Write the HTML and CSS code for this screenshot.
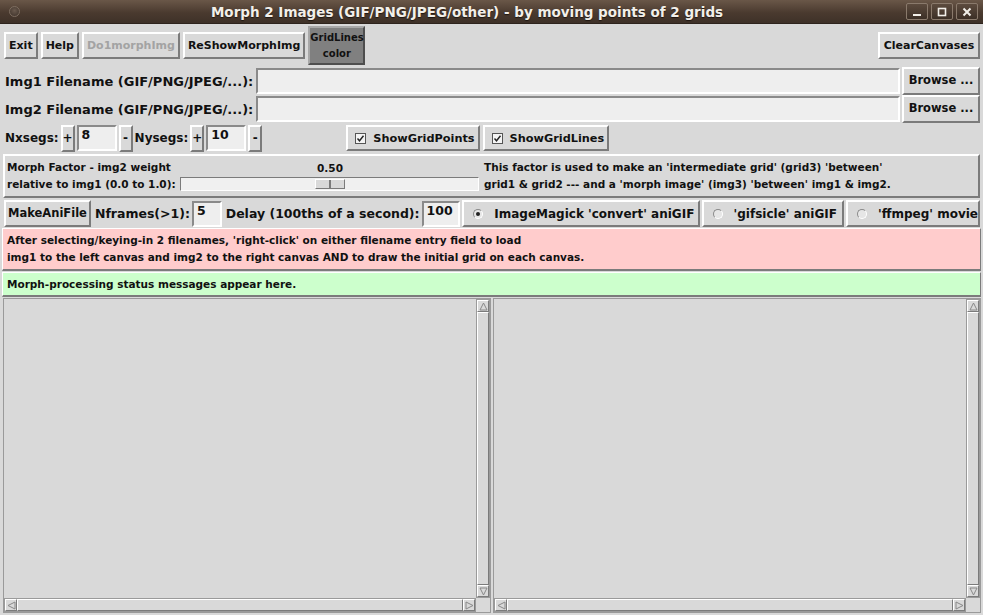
FILE: index.html
```html
<!DOCTYPE html>
<html lang="en">
<head>
    <meta charset="UTF-8">
    <title>Morph 2 Images</title>
    <link rel="stylesheet" href="styles.css">
</head>
<body>
<div class="window">
    <div class="titlebar">
        <div class="title-left"><span class="close-dot"></span></div>
        <div class="title-text">Morph 2 Images (GIF/PNG/JPEG/other) - by moving points of 2 grids</div>
        <div class="title-right">
            <span class="wm-btn">
                <svg width="10" height="10" viewBox="0 0 10 10"><rect x="1" y="7" width="8" height="2" fill="#f2efe9"/></svg>
            </span>
            <span class="wm-btn">
                <svg width="10" height="10" viewBox="0 0 10 10"><rect x="1.5" y="1.5" width="7" height="7" fill="none" stroke="#f2efe9" stroke-width="1.6"/></svg>
            </span>
            <span class="wm-btn">
                <svg width="10" height="10" viewBox="0 0 10 10"><path d="M1.5 1.5 L8.5 8.5 M8.5 1.5 L1.5 8.5" stroke="#f2efe9" stroke-width="2"/></svg>
            </span>
        </div>
    </div>

    <!-- top buttons -->
    <div class="toolbar">
        <button class="btn">Exit</button>
        <button class="btn">Help</button>
        <button class="btn disabled">Do1morphImg</button>
        <button class="btn">ReShowMorphImg</button>
        <button class="btn color-btn">GridLines<br>color</button>
        <div class="spacer"></div>
        <button class="btn clear-btn">ClearCanvases</button>
    </div>

    <!-- filename entries -->
    <div class="file-row">
        <span class="label">Img1 Filename (GIF/PNG/JPEG/...):</span>
        <div class="entry file-entry"></div>
        <button class="btn browse">Browse ...</button>
    </div>
    <div class="file-row">
        <span class="label">Img2 Filename (GIF/PNG/JPEG/...):</span>
        <div class="entry file-entry"></div>
        <button class="btn browse">Browse ...</button>
    </div>

    <!-- grid segments -->
    <div class="segs-row">
        <span class="label">Nxsegs:</span>
        <button class="btn tiny">+</button>
        <div class="entry seg-entry">8</div>
        <button class="btn tiny">-</button>
        <span class="label">Nysegs:</span>
        <button class="btn tiny">+</button>
        <div class="entry seg-entry">10</div>
        <button class="btn tiny">-</button>
        <div class="checks">
            <div class="check-btn"><span class="checkbox"><svg width="9" height="9" viewBox="0 0 9 9"><path d="M1.5 4.5 L3.5 6.8 L7.5 1.8" fill="none" stroke="#222" stroke-width="1.4"/></svg></span>ShowGridPoints</div>
            <div class="check-btn"><span class="checkbox"><svg width="9" height="9" viewBox="0 0 9 9"><path d="M1.5 4.5 L3.5 6.8 L7.5 1.8" fill="none" stroke="#222" stroke-width="1.4"/></svg></span>ShowGridLines</div>
        </div>
    </div>

    <!-- morph factor -->
    <div class="factor-frame">
        <div class="factor-label small">Morph Factor - img2 weight<br>relative to img1 (0.0 to 1.0):</div>
        <div class="scale">
            <div class="scale-value small">0.50</div>
            <div class="trough"><span class="slider"></span></div>
        </div>
        <div class="factor-note small">This factor is used to make an 'intermediate grid' (grid3) 'between'<br>grid1 &amp; grid2 --- and a 'morph image' (img3) 'between' img1 &amp; img2.</div>
    </div>

    <!-- animation -->
    <div class="ani-row">
        <button class="btn">MakeAniFile</button>
        <span class="label">Nframes(&gt;1):</span>
        <div class="entry frames-entry">5</div>
        <span class="label delay-label">Delay (100ths of a second):</span>
        <div class="entry delay-entry">100</div>
        <div class="radio-btn rb1"><span class="radio on"></span>ImageMagick 'convert' aniGIF</div>
        <div class="radio-btn rb2"><span class="radio"></span>'gifsicle' aniGIF</div>
        <div class="radio-btn rb3"><span class="radio"></span>'ffmpeg' movie</div>
    </div>

    <div class="msg pink small">After selecting/keying-in 2 filenames, 'right-click' on either filename entry field to load<br>img1 to the left canvas and img2 to the right canvas AND to draw the initial grid on each canvas.</div>
    <div class="msg green small">Morph-processing status messages appear here.</div>

    <!-- canvases -->
    <div class="canvases">
        <div class="pane">
            <div class="pane-top">
                <div class="canvas"></div>
                <div class="vscroll">
                    <span class="arr"><svg width="9" height="9" viewBox="0 0 9 9"><path d="M4.5 1 L8 8 L1 8 Z" fill="#d9d9d9" stroke="#888"/></svg></span>
                    <span class="thumb"></span>
                    <span class="arr"><svg width="9" height="9" viewBox="0 0 9 9"><path d="M4.5 8 L8 1 L1 1 Z" fill="#d9d9d9" stroke="#888"/></svg></span>
                </div>
            </div>
            <div class="pane-bottom">
                <div class="hscroll">
                    <span class="arr"><svg width="9" height="9" viewBox="0 0 9 9"><path d="M1 4.5 L8 1 L8 8 Z" fill="#d9d9d9" stroke="#888"/></svg></span>
                    <span class="thumb"></span>
                    <span class="arr"><svg width="9" height="9" viewBox="0 0 9 9"><path d="M8 4.5 L1 1 L1 8 Z" fill="#d9d9d9" stroke="#888"/></svg></span>
                </div>
                <div class="corner"></div>
            </div>
        </div>
        <div class="pane">
            <div class="pane-top">
                <div class="canvas"></div>
                <div class="vscroll">
                    <span class="arr"><svg width="9" height="9" viewBox="0 0 9 9"><path d="M4.5 1 L8 8 L1 8 Z" fill="#d9d9d9" stroke="#888"/></svg></span>
                    <span class="thumb"></span>
                    <span class="arr"><svg width="9" height="9" viewBox="0 0 9 9"><path d="M4.5 8 L8 1 L1 1 Z" fill="#d9d9d9" stroke="#888"/></svg></span>
                </div>
            </div>
            <div class="pane-bottom">
                <div class="hscroll">
                    <span class="arr"><svg width="9" height="9" viewBox="0 0 9 9"><path d="M1 4.5 L8 1 L8 8 Z" fill="#d9d9d9" stroke="#888"/></svg></span>
                    <span class="thumb"></span>
                    <span class="arr"><svg width="9" height="9" viewBox="0 0 9 9"><path d="M8 4.5 L1 1 L1 8 Z" fill="#d9d9d9" stroke="#888"/></svg></span>
                </div>
                <div class="corner"></div>
            </div>
        </div>
    </div>
</div>
</body>
</html>
```

FILE: styles.css
```css
* {
    box-sizing: border-box;
}
body {
    margin: 0;
    padding: 0;
    background-color: #d9d9d9;
    font-family: "DejaVu Sans", sans-serif;
    font-weight: bold;
    font-size: 13px;
    color: #111;
}
.window {
    width: 983px;
    height: 615px;
    display: flex;
    flex-direction: column;
    overflow: hidden;
    background-color: #d9d9d9;
}
.titlebar {
    height: 24px;
    flex: none;
    display: flex;
    align-items: center;
    background: linear-gradient(#6a5748, #4a3a2f 55%, #3e3128);
    border-bottom: 1px solid #2e241d;
}
.title-left {
    width: 28px;
    display: flex;
    justify-content: center;
}
.close-dot {
    width: 11px;
    height: 11px;
    border-radius: 50%;
    background: radial-gradient(circle at 50% 40%, #6a5a4e, #3c3028);
    border: 1px solid #7d6d60;
}
.title-text {
    flex: 1;
    text-align: center;
    color: #f2efe9;
    font-size: 13.5px;
    text-shadow: 0 1px 1px #1e1611;
    white-space: nowrap;
}
.title-right {
    display: flex;
    gap: 3px;
    padding-right: 5px;
}
.wm-btn {
    width: 22px;
    height: 17px;
    display: flex;
    align-items: center;
    justify-content: center;
    border: 1px solid #8a7a6c;
    border-radius: 2px;
    background: linear-gradient(#5c4b3e, #3c2f26);
}
.btn {
    font-family: inherit;
    font-weight: bold;
    font-size: 11px;
    color: #111;
    background-color: #d9d9d9;
    border: 2px solid;
    border-color: #ffffff #7b7b7b #7b7b7b #ffffff;
    height: 27px;
    padding: 0 3px;
    margin: 0;
    white-space: nowrap;
    line-height: 1;
}
.btn.disabled {
    color: #a3a3a3;
}
.toolbar {
    height: 43px;
    flex: none;
    display: flex;
    align-items: center;
    gap: 3px;
    padding: 0 3px 0 4px;
}
.color-btn {
    height: 39px;
    width: 57px;
    padding: 0;
    font-size: 10px;
    line-height: 16px;
    background-color: #808080;
    border-color: #a8a8a8 #4e4e4e #4e4e4e #a8a8a8;
}
.spacer {
    flex: 1;
}
.clear-btn {
    width: 102px;
}
.label {
    white-space: nowrap;
}
.entry {
    height: 26px;
    background-color: #eeeeee;
    border: 2px solid;
    border-color: #8a8a8a #ffffff #ffffff #8a8a8a;
    padding: 2px 4px 0 3px;
    font-size: 12.5px;
    line-height: 1;
}
.file-row {
    height: 28px;
    flex: none;
    display: flex;
    align-items: center;
    padding: 0 3px 0 5px;
    gap: 2px;
}
.file-entry {
    flex: 1;
    margin-left: 1px;
}
.browse {
    width: 78px;
    height: 28px;
    font-size: 11.5px;
}
.segs-row {
    height: 30px;
    flex: none;
    display: flex;
    align-items: center;
    padding: 0 3px 0 5px;
    gap: 2px;
    font-size: 12px;
}
.tiny {
    width: 14px;
    padding: 0;
    font-size: 12px;
}
.seg-entry {
    width: 40px;
}
.checks {
    display: flex;
    gap: 3px;
    margin-left: 82px;
}
.check-btn,
.radio-btn {
    height: 26px;
    display: flex;
    align-items: center;
    border: 2px solid;
    border-color: #ffffff #7b7b7b #7b7b7b #ffffff;
    white-space: nowrap;
    font-size: 12px;
}
.check-btn {
    padding: 0 3px 0 7px;
    font-size: 11.3px;
}
.checkbox {
    width: 11px;
    height: 11px;
    border: 1px solid #555;
    background-color: #f4f4f4;
    margin-right: 7px;
    display: flex;
    align-items: center;
    justify-content: center;
}
.small {
    font-size: 10.5px;
    line-height: 17px;
}
.factor-frame {
    flex: none;
    height: 44px;
    margin: 1px 3px 1px 3px;
    border: 2px solid;
    border-color: #ffffff #7b7b7b #7b7b7b #ffffff;
    display: flex;
    align-items: center;
    padding: 0 0 1px 2px;
}
.factor-label {
    width: 173px;
    white-space: nowrap;
}
.scale {
    width: 299px;
    display: flex;
    flex-direction: column;
    align-items: stretch;
}
.scale-value {
    text-align: center;
    margin-left: 120px;
    width: 60px;
}
.trough {
    height: 14px;
    background-color: #f0f0f0;
    border: 1px solid;
    border-color: #7b7b7b #ffffff #ffffff #7b7b7b;
    position: relative;
}
.slider {
    position: absolute;
    left: 134px;
    top: 1px;
    width: 30px;
    height: 10px;
    background: linear-gradient(90deg, #d9d9d9 48%, #7b7b7b 48%, #7b7b7b 52%, #d9d9d9 52%);
    border: 1px solid;
    border-color: #ffffff #7b7b7b #7b7b7b #ffffff;
}
.factor-note {
    padding-left: 5px;
    white-space: nowrap;
}
.ani-row {
    height: 29px;
    flex: none;
    display: flex;
    align-items: center;
    padding: 0 3px 0 4px;
    gap: 2px;
    font-size: 12.5px;
}
.ani-row .btn {
    font-size: 11.5px;
    padding: 0 2px;
    margin-right: 2px;
}
.frames-entry {
    width: 30px;
}
.delay-label {
    margin-left: 2px;
}
.delay-entry {
    width: 39px;
}
.radio-btn {
    height: 27px;
    padding-left: 9px;
}
.rb1 {
    width: 240px;
}
.rb2 {
    width: 144px;
}
.rb3 {
    flex: 1;
}
.radio {
    width: 10px;
    height: 10px;
    border-radius: 50%;
    border: 1px solid;
    border-color: #8a8a8a #ffffff #ffffff #8a8a8a;
    background-color: #e6e6e6;
    margin-right: 11px;
    position: relative;
}
.radio.on::after {
    content: "";
    position: absolute;
    left: 2px;
    top: 2px;
    width: 4px;
    height: 4px;
    border-radius: 50%;
    background-color: #222;
}
.msg {
    flex: none;
    margin: 0 2px 0 2px;
    padding: 3px 4px 0 4px;
    border: 1px solid;
    border-color: #ffffff #7b7b7b #7b7b7b #ffffff;
    border-bottom-width: 2px;
    white-space: nowrap;
}
.pink {
    background-color: #ffcccc;
    height: 43px;
}
.green {
    background-color: #ccffcc;
    height: 25px;
    margin-top: 1px;
}
.canvases {
    flex: 1;
    display: flex;
    gap: 2px;
    padding: 1px 2px 2px 3px;
}
.pane {
    flex: 1;
    display: flex;
    flex-direction: column;
    border: 1px solid #9a9a9a;
}
.pane-top {
    flex: 1;
    display: flex;
}
.canvas {
    flex: 1;
    background-color: #d9d9d9;
}
.vscroll,
.hscroll {
    display: flex;
    background-color: #c3c3c3;
    border: 1px solid #9a9a9a;
}
.vscroll {
    width: 14px;
    flex-direction: column;
}
.hscroll {
    flex: 1;
    height: 14px;
}
.arr {
    width: 12px;
    height: 12px;
    flex: none;
    display: flex;
    align-items: center;
    justify-content: center;
    background-color: #d9d9d9;
    border: 1px solid;
    border-color: #ffffff #7b7b7b #7b7b7b #ffffff;
}
.thumb {
    flex: 1;
    background-color: #d9d9d9;
    border: 1px solid;
    border-color: #ffffff #7b7b7b #7b7b7b #ffffff;
}
.pane-bottom {
    display: flex;
}
.corner {
    width: 14px;
    height: 14px;
}
```
